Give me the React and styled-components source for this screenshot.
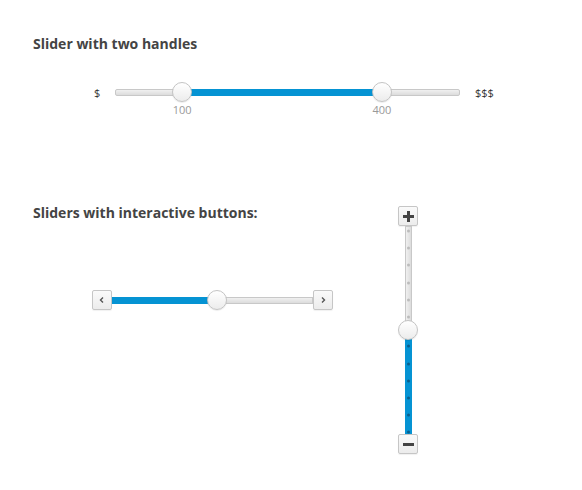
import React from "react";
import styled, { createGlobalStyle } from "styled-components";

const GlobalStyle = createGlobalStyle`
  body {
    margin: 0;
    background: #ffffff;
    font-family: "Open Sans", "Liberation Sans", sans-serif;
  }
`;

const Page = styled.div`
  width: 582px;
  height: 490px;
  padding: 35px 0 0 33px;
  box-sizing: border-box;
`;

const Title = styled.h3`
  margin: 0;
  font-size: 14px;
  line-height: 18px;
  font-weight: 700;
  color: #444;
`;

const RangeRow = styled.div`
  display: flex;
  align-items: center;
  margin: 29px 0 0 61px;
  height: 20px;
`;

const EndLabel = styled.span`
  font-size: 11px;
  color: #333;
  width: ${(p) => p.$w}px;
`;

const Track = styled.div`
  position: relative;
  box-sizing: border-box;
  width: ${(p) => (p.$vertical ? "7px" : `${p.$len}px`)};
  height: ${(p) => (p.$vertical ? `${p.$len}px` : "7px")};
  border: 1px solid #c8c8c8;
  border-radius: ${(p) => (p.$square ? "0" : "2px")};
  background: ${(p) =>
    p.$vertical
      ? "linear-gradient(to right, #f0f0f0, #dcdcdc)"
      : "linear-gradient(to bottom, #f0f0f0, #dcdcdc)"};
`;

const Fill = styled.div`
  position: absolute;
  top: -1px;
  bottom: -1px;
  background: #0593d3;
`;

const VFill = styled.div`
  position: absolute;
  left: -1px;
  right: -1px;
  background: #0593d3;
`;

const Handle = styled.div`
  position: absolute;
  width: 20px;
  height: 20px;
  box-sizing: border-box;
  border-radius: 50%;
  border: 1px solid #c4c4c4;
  background: linear-gradient(to bottom, #ffffff, #ececec);
  box-shadow: 0 1px 1px rgba(0, 0, 0, 0.08);
  transform: translate(-50%, -50%);
  z-index: 2;
`;

const HandleLabel = styled.span`
  position: absolute;
  top: 13px;
  transform: translateX(-50%);
  font-size: 11px;
  line-height: 13px;
  color: #999;
`;

const Dot = styled.span`
  position: absolute;
  left: 1px;
  width: 3px;
  height: 3px;
  border-radius: 50%;
  transform: translateY(-50%);
  background: ${(p) => (p.$on ? "#0a5f8c" : "#bcbcbc")};
  z-index: 1;
`;

const Second = styled.div`
  display: flex;
  margin-top: 98px;
`;

const LeftCol = styled.div`
  width: 365px;
  padding-top: 4px;
`;

const StepRow = styled.div`
  display: flex;
  align-items: center;
  margin: 68px 0 0 59px;
`;

const StepCol = styled.div`
  display: flex;
  flex-direction: column;
  align-items: center;
  margin-top: 6px;
`;

const StepButton = styled.button`
  width: 20px;
  height: 20px;
  box-sizing: border-box;
  padding: 0;
  margin: 0;
  border: 1px solid #c6c6c6;
  border-radius: 2px;
  background: linear-gradient(to bottom, #fafafa, #ececec);
  box-shadow: 0 1px 1px rgba(0, 0, 0, 0.06);
  display: flex;
  align-items: center;
  justify-content: center;
  color: #444;
`;

const Chevron = ({ dir }) => (
  <svg width="8" height="8" viewBox="0 0 8 8">
    <path
      d={dir === "left" ? "M5 1.5 L2.5 4 L5 6.5" : "M3 1.5 L5.5 4 L3 6.5"}
      fill="none"
      stroke="#555"
      strokeWidth="1.4"
    />
  </svg>
);

const PlusIcon = () => (
  <svg width="11" height="11" viewBox="0 0 11 11">
    <rect x="0" y="4" width="11" height="3" fill="#444" />
    <rect x="4" y="0" width="3" height="11" fill="#444" />
  </svg>
);

const MinusIcon = () => (
  <svg width="11" height="11" viewBox="0 0 11 11">
    <rect x="0" y="4" width="11" height="3" fill="#444" />
  </svg>
);

const rangeLow = 19.3;
const rangeHigh = 77.5;
const stepValue = 52.5;
const vertValue = 50;
const dotsTop = [4, 21, 38, 56, 73, 90];
const dotsBottom = [119, 137, 154, 171, 188, 205];

export default function App() {
  return (
    <Page>
      <GlobalStyle />
      <Title>Slider with two handles</Title>
      <RangeRow>
        <EndLabel $w={21}>$</EndLabel>
        <Track $len={345}>
          <Fill style={{ left: `${rangeLow}%`, width: `${rangeHigh - rangeLow}%` }} />
          <Handle style={{ left: `${rangeLow}%`, top: "50%" }} />
          <HandleLabel style={{ left: `${rangeLow}%` }}>100</HandleLabel>
          <Handle style={{ left: `${rangeHigh}%`, top: "50%" }} />
          <HandleLabel style={{ left: `${rangeHigh}%` }}>400</HandleLabel>
        </Track>
        <EndLabel $w={40} style={{ marginLeft: 15 }}>$$$</EndLabel>
      </RangeRow>

      <Second>
        <LeftCol>
          <Title>Sliders with interactive buttons:</Title>
          <StepRow>
            <StepButton>
              <Chevron dir="left" />
            </StepButton>
            <Track $len={201} $square>
              <Fill style={{ left: "-1px", width: `${stepValue}%` }} />
              <Handle style={{ left: `${stepValue}%`, top: "50%" }} />
            </Track>
            <StepButton>
              <Chevron dir="right" />
            </StepButton>
          </StepRow>
        </LeftCol>
        <StepCol>
          <StepButton>
            <PlusIcon />
          </StepButton>
          <Track $vertical $len={208} $square>
            <VFill style={{ top: `${vertValue}%`, bottom: "-1px" }} />
            {dotsTop.map((y) => (
              <Dot key={y} style={{ top: y }} />
            ))}
            {dotsBottom.map((y) => (
              <Dot key={y} $on style={{ top: y }} />
            ))}
            <Handle style={{ left: "50%", top: `${vertValue}%` }} />
          </Track>
          <StepButton>
            <MinusIcon />
          </StepButton>
        </StepCol>
      </Second>
    </Page>
  );
}
